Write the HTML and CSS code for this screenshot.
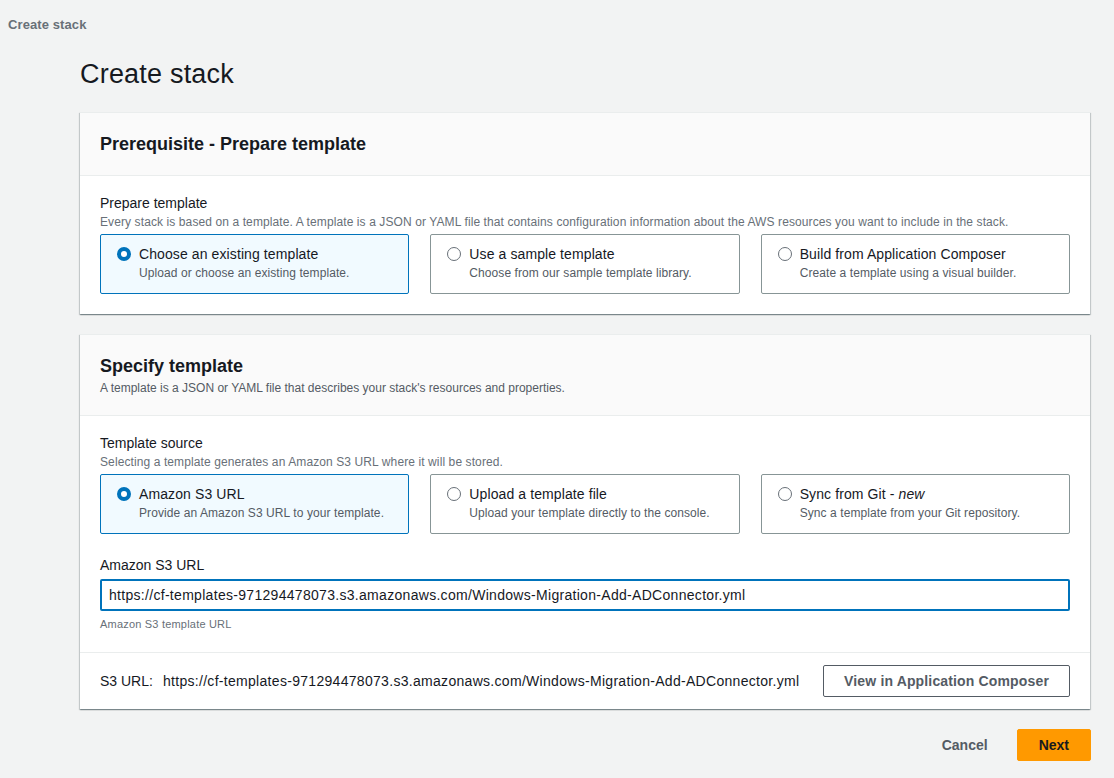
FILE: index.html
```html
<!DOCTYPE html>
<html>
<head>
<meta charset="utf-8">
<link rel="stylesheet" href="styles.css">
</head>
<body>
<div class="crumb">Create stack</div>
<main class="main">
  <h1 class="title">Create stack</h1>

  <section class="panel">
    <div class="panel-head">
      <h2 class="panel-title">Prerequisite - Prepare template</h2>
    </div>
    <div class="panel-body">
      <div class="field-label">Prepare template</div>
      <div class="field-desc">Every stack is based on a template. A template is a JSON or YAML file that contains configuration information about the AWS resources you want to include in the stack.</div>
      <div class="tiles">
        <div class="tile selected">
          <span class="radio on"></span>
          <div class="tile-text">
            <div class="tile-title">Choose an existing template</div>
            <div class="tile-desc">Upload or choose an existing template.</div>
          </div>
        </div>
        <div class="tile">
          <span class="radio"></span>
          <div class="tile-text">
            <div class="tile-title">Use a sample template</div>
            <div class="tile-desc">Choose from our sample template library.</div>
          </div>
        </div>
        <div class="tile">
          <span class="radio"></span>
          <div class="tile-text">
            <div class="tile-title">Build from Application Composer</div>
            <div class="tile-desc">Create a template using a visual builder.</div>
          </div>
        </div>
      </div>
    </div>
  </section>

  <section class="panel">
    <div class="panel-head tall">
      <h2 class="panel-title">Specify template</h2>
      <div class="panel-desc">A template is a JSON or YAML file that describes your stack's resources and properties.</div>
    </div>
    <div class="panel-body">
      <div class="field-label">Template source</div>
      <div class="field-desc">Selecting a template generates an Amazon S3 URL where it will be stored.</div>
      <div class="tiles">
        <div class="tile selected">
          <span class="radio on"></span>
          <div class="tile-text">
            <div class="tile-title">Amazon S3 URL</div>
            <div class="tile-desc">Provide an Amazon S3 URL to your template.</div>
          </div>
        </div>
        <div class="tile">
          <span class="radio"></span>
          <div class="tile-text">
            <div class="tile-title">Upload a template file</div>
            <div class="tile-desc">Upload your template directly to the console.</div>
          </div>
        </div>
        <div class="tile">
          <span class="radio"></span>
          <div class="tile-text">
            <div class="tile-title">Sync from Git - <em>new</em></div>
            <div class="tile-desc">Sync a template from your Git repository.</div>
          </div>
        </div>
      </div>
      <div class="field-label url-label">Amazon S3 URL</div>
      <input class="url-input" type="text" value="https://cf-templates-971294478073.s3.amazonaws.com/Windows-Migration-Add-ADConnector.yml">
      <div class="hint">Amazon S3 template URL</div>
    </div>
    <div class="panel-foot">
      <div class="s3url"><span class="s3key">S3 URL:</span>https://cf-templates-971294478073.s3.amazonaws.com/Windows-Migration-Add-ADConnector.yml</div>
      <button class="btn-normal">View in Application Composer</button>
    </div>
  </section>

  <div class="actions">
    <button class="btn-link">Cancel</button>
    <button class="btn-primary">Next</button>
  </div>
</main>
</body>
</html>
```
FILE: styles.css
```css
* { box-sizing: border-box; }
html, body { margin: 0; padding: 0; }
body {
  background: #f2f3f3;
  font-family: "Liberation Sans", Arial, sans-serif;
  color: #16191f;
  width: 1114px;
  height: 778px;
  overflow: hidden;
}
.crumb {
  padding: 17px 0 0 8px;
  height: 42px;
  font-size: 13px;
  font-weight: bold;
  color: #687078;
  letter-spacing: 0.1px;
}
.main {
  padding: 0 24px 0 80px;
}
.title {
  margin: 0;
  font-size: 27px;
  font-weight: normal;
  line-height: 36px;
  height: 70px;
  padding-top: 14px;
  letter-spacing: 0.2px;
}
.panel {
  background: #fff;
  box-shadow: 0 1px 1px 0 rgba(0,28,36,0.3), 1px 1px 1px 0 rgba(0,28,36,0.15), -1px 1px 1px 0 rgba(0,28,36,0.15);
  border-top: 1px solid #eaeded;
  margin-bottom: 20px;
}
.panel-head {
  background: #fafafa;
  border-bottom: 1px solid #eaeded;
  padding: 19px 20px 0 20px;
  height: 63px;
}
.panel-head.tall { height: 81px; padding-top: 19px; }
.panel-title {
  margin: 0;
  font-size: 18px;
  font-weight: bold;
  line-height: 24px;
}
.panel-desc {
  font-size: 12px;
  color: #545b64;
  line-height: 16px;
  margin-top: 2px;
}
.panel-body {
  padding: 17px 20px 20px 20px;
}
.field-label {
  font-size: 14px;
  line-height: 20px;
}
.field-desc {
  font-size: 12px;
  letter-spacing: 0.1px;
  color: #687078;
  line-height: 16px;
  margin-top: 1px;
}
.tiles {
  display: grid;
  grid-template-columns: repeat(3, 1fr);
  gap: 21px;
  margin-top: 4px;
}
.tile {
  height: 60px;
  border: 1px solid #879596;
  border-radius: 2px;
  display: flex;
  align-items: flex-start;
  padding: 9px 0 0 16px;
}
.tile.selected {
  background: #f1faff;
  border-color: #0073bb;
}
.radio {
  width: 14px;
  height: 14px;
  border: 1px solid #687078;
  border-radius: 50%;
  margin-top: 3px;
  margin-right: 8px;
  flex: none;
}
.radio.on {
  border: 4px solid #0073bb;
  background: #fff;
}
.tile-title {
  font-size: 14px;
  line-height: 20px;
  letter-spacing: 0.1px;
}
.tile-desc {
  font-size: 12px;
  letter-spacing: 0.08px;
  color: #545b64;
  line-height: 16px;
  margin-top: 1px;
}
.url-label {
  margin-top: 21px;
}
.url-input {
  display: block;
  width: 100%;
  height: 32px;
  margin-top: 4px;
  border: 2px solid #0073bb;
  border-radius: 2px;
  padding: 0 7px;
  font-family: "Liberation Sans", Arial, sans-serif;
  font-size: 14px;
  letter-spacing: 0.3px;
  color: #16191f;
  outline: none;
}
.hint {
  font-size: 11px;
  letter-spacing: 0.2px;
  color: #687078;
  line-height: 16px;
  margin-top: 5px;
}
.panel-foot {
  border-top: 1px solid #eaeded;
  display: flex;
  align-items: center;
  justify-content: space-between;
  padding: 12px 20px 12px 20px;
}
.s3url {
  font-size: 14px;
  letter-spacing: 0.3px;
}
.s3key { margin-right: 10px; letter-spacing: 0; }
.btn-normal {
  height: 32px;
  padding: 0 20px;
  background: #fff;
  border: 1px solid #545b64;
  border-radius: 2px;
  font-family: "Liberation Sans", Arial, sans-serif;
  font-weight: bold;
  font-size: 14px;
  letter-spacing: 0.15px;
  color: #545b64;
}
.actions {
  display: flex;
  justify-content: flex-end;
  align-items: center;
  gap: 10px;
  margin-top: 0;
  margin-right: -1px;
}
.btn-link {
  background: none;
  border: none;
  font-family: "Liberation Sans", Arial, sans-serif;
  font-weight: bold;
  font-size: 14px;
  color: #545b64;
  padding: 0 19px 0 20px;
  height: 32px;
}
.btn-primary {
  background: #ff9900;
  border: 1px solid #ff9900;
  border-radius: 2px;
  height: 32px;
  padding: 0 21px;
  font-family: "Liberation Sans", Arial, sans-serif;
  font-weight: bold;
  font-size: 14px;
  color: #16191f;
}
```
